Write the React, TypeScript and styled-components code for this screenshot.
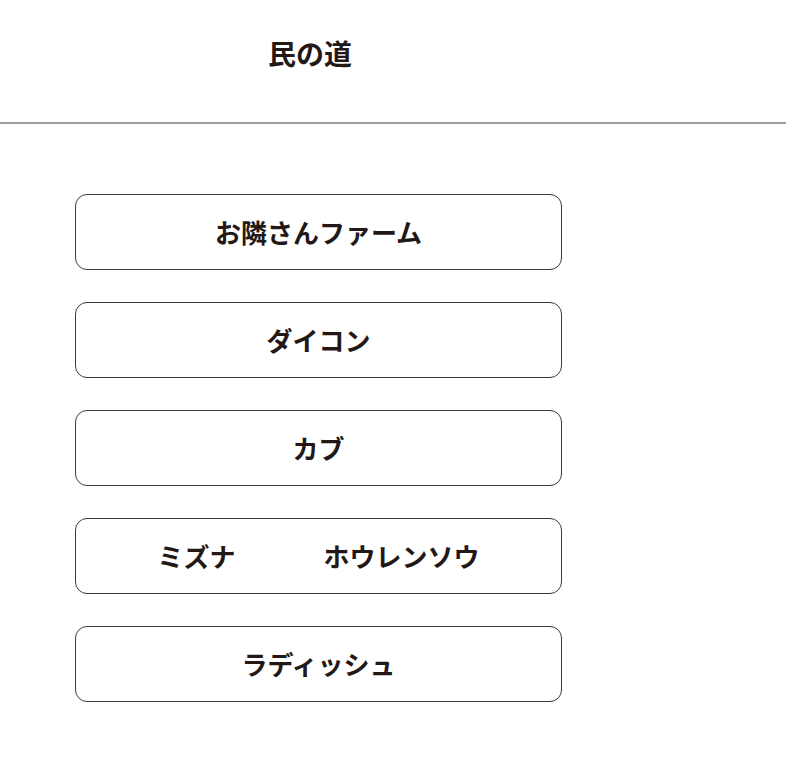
import React from "react";
import styled, { createGlobalStyle } from "styled-components";

const Global = createGlobalStyle`
  html, body { margin: 0; padding: 0; background: #fff; }
  body { font-family: "Noto Sans CJK JP", "Noto Sans", sans-serif; color: #231815; }
`;

const Page = styled.div`
  width: 786px;
  min-height: 760px;
  background: #fff;
`;

const Header = styled.header`
  height: 122px;
  border-bottom: 2px solid #9d9d9d;
  box-sizing: content-box;
  display: flex;
  align-items: flex-start;
`;

const Title = styled.h1`
  width: 620px;
  margin: 0;
  padding-top: 34px;
  text-align: center;
  font-size: 28px;
  line-height: 38px;
  font-weight: 700;
  color: #231815;
`;

const List = styled.nav`
  display: flex;
  flex-direction: column;
  gap: 32px;
  padding: 70px 0 0 75px;
`;

const Item = styled.button`
  width: 487px;
  height: 76px;
  box-sizing: border-box;
  border: 1px solid #3a3a3a;
  border-radius: 12px;
  background: #fff;
  display: flex;
  align-items: center;
  justify-content: center;
  gap: ${(p: { $gap?: number }) => (p.$gap ? `${p.$gap}px` : "0")};
  font-family: "Noto Sans CJK JP", "Noto Sans", sans-serif;
  font-size: 26px;
  font-weight: 700;
  color: #231815;
  padding: 0;
  cursor: pointer;
`;

const Label = styled.span`
  display: inline-block;
  line-height: 1;
`;

export default function App() {
  return (
    <Page>
      <Global />
      <Header>
        <Title>民の道</Title>
      </Header>
      <List>
        <Item><Label>お隣さんファーム</Label></Item>
        <Item><Label>ダイコン</Label></Item>
        <Item><Label>カブ</Label></Item>
        <Item $gap={88}>
          <Label>ミズナ</Label>
          <Label>ホウレンソウ</Label>
        </Item>
        <Item><Label>ラディッシュ</Label></Item>
      </List>
    </Page>
  );
}
